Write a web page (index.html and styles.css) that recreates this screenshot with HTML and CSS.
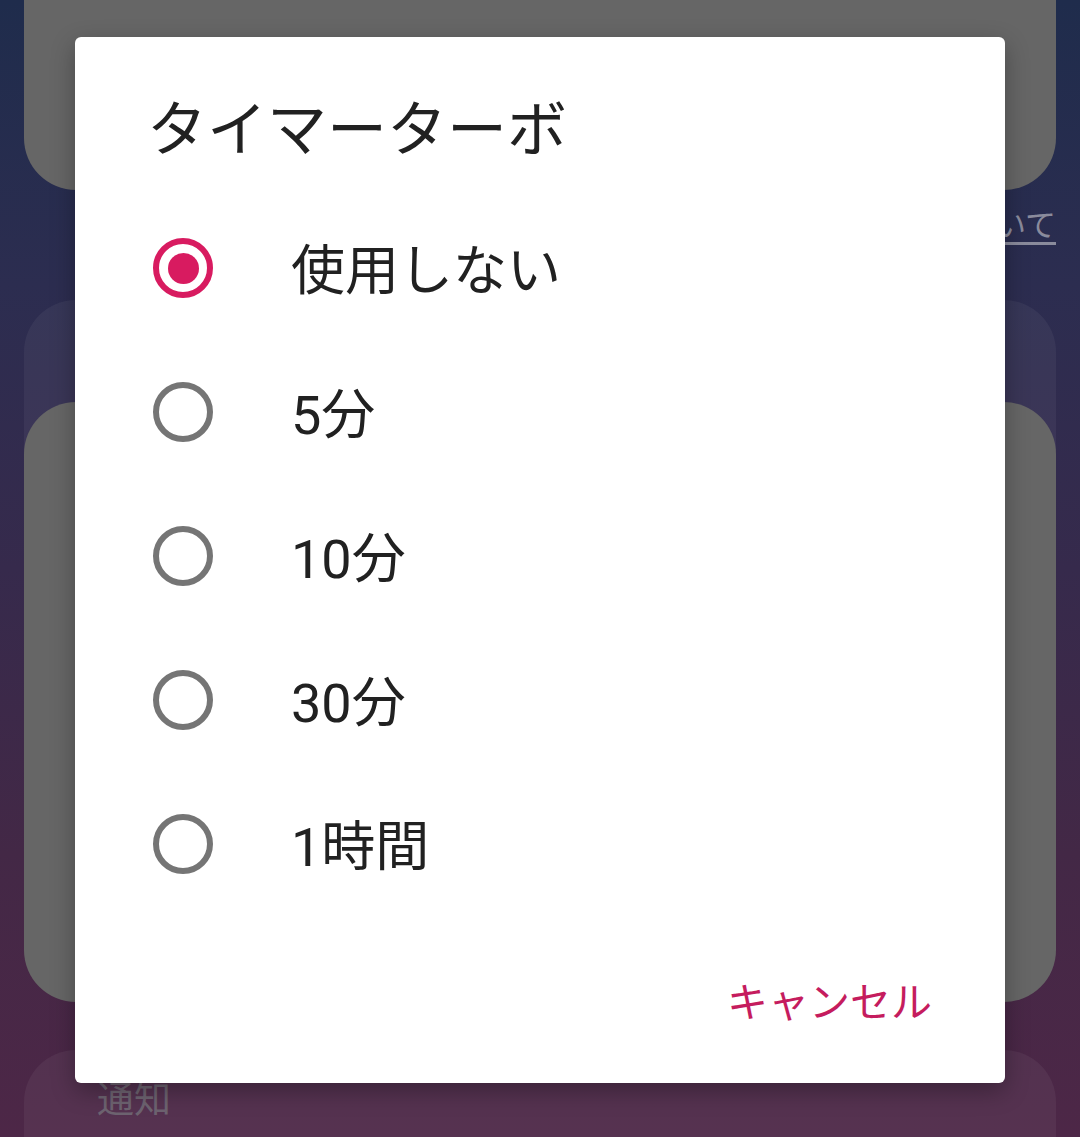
FILE: index.html
```html
<!doctype html>
<html>
  <head>
    <meta charset='utf-8'>
    <title>タイマーターボ</title>
    <link rel="stylesheet" href="styles.css">
  </head>
  <body>

    <div class="screen">
      <div class="card card-top"></div>
      <div class="link-row"><a class="link">アプリについて</a></div>
      <div class="card card-ghost"></div>
      <div class="card card-main"></div>
      <div class="card card-ghost card-notify">
        <div class="card-label">通知</div>
      </div>
    </div>

    <div class="dialog">
      <h2 class="dialog-title">タイマーターボ</h2>
      <ul class="choices">
        <li class="choice checked"><span class="radio"></span><span class="label">使用しない</span></li>
        <li class="choice"><span class="radio"></span><span class="label">5分</span></li>
        <li class="choice"><span class="radio"></span><span class="label">10分</span></li>
        <li class="choice"><span class="radio"></span><span class="label">30分</span></li>
        <li class="choice"><span class="radio"></span><span class="label">1時間</span></li>
      </ul>
      <div class="dialog-actions">
        <button class="btn-text">キャンセル</button>
      </div>
    </div>

  </body>
</html>
```

FILE: styles.css
```css
html, body {
  margin: 0;
  height: 100%;
}
body {
  position: relative;
  width: 1080px;
  height: 1137px;
  overflow: hidden;
  font-family: Roboto, "Noto Sans CJK JP", sans-serif;
  background: linear-gradient(#1f2c4c 0%, #2c2d50 25%, #362a4c 50%, #432846 75%, #4d2747 100%);
}

/* dimmed screen behind the dialog */
.screen {
  display: flex;
  flex-direction: column;
  padding: 0 24px;
}
.card {
  border-radius: 52px;
}
.card-top {
  height: 190px;
  background: #666;
  border-radius: 0 0 52px 52px;
}
.link-row {
  height: 110px;
  display: flex;
  justify-content: flex-end;
  padding-top: 16px;
  box-sizing: border-box;
}
.link {
  font-size: 31px;
  line-height: 40px;
  color: #8a8b9c;
  text-decoration: underline;
  text-underline-offset: 6px;
}
.card-ghost {
  height: 160px;
  background: rgba(255, 255, 255, 0.05);
  border-radius: 52px 52px 0 0;
}
.card-main {
  height: 600px;
  margin-top: -58px;
  background: #666;
}
.card-notify {
  margin-top: 48px;
  height: 87px;
  box-sizing: border-box;
  padding: 26px 0 0 73px;
}
.card-label {
  font-size: 37px;
  line-height: 50px;
  color: #6d6370;
}

/* dialog */
.dialog {
  position: absolute;
  left: 75px;
  top: 37px;
  width: 930px;
  height: 1046px;
  background: #fff;
  border-radius: 6px;
  box-shadow: 0 8px 24px rgba(0, 0, 0, 0.3);
  display: flex;
  flex-direction: column;
}
.dialog-title {
  margin: 54px 0 0;
  padding: 0 72px;
  font-size: 60px;
  line-height: 80px;
  font-weight: 400;
  color: #212121;
}
.choices {
  list-style: none;
  margin: 25px 0 0;
  padding: 0;
}
.choice {
  height: 144px;
  display: flex;
  align-items: center;
  padding-left: 78px;
}
.radio {
  width: 60px;
  height: 60px;
  box-sizing: border-box;
  border: 6px solid #757575;
  border-radius: 50%;
  display: flex;
  align-items: center;
  justify-content: center;
}
.choice.checked .radio {
  border-color: #d81b60;
}
.choice.checked .radio:after {
  content: "";
  width: 31px;
  height: 31px;
  border-radius: 50%;
  background: #d81b60;
}
.label {
  margin-left: 78px;
  padding-bottom: 4px;
  font-size: 54px;
  color: #212121;
}
.dialog-actions {
  flex: 1;
  display: flex;
  justify-content: flex-end;
  align-items: center;
  padding-right: 73px;
  padding-bottom: 2px;
}
.btn-text {
  border: 0;
  background: none;
  padding: 0;
  font-family: inherit;
  font-size: 41px;
  color: #c51c5e;
}
```
